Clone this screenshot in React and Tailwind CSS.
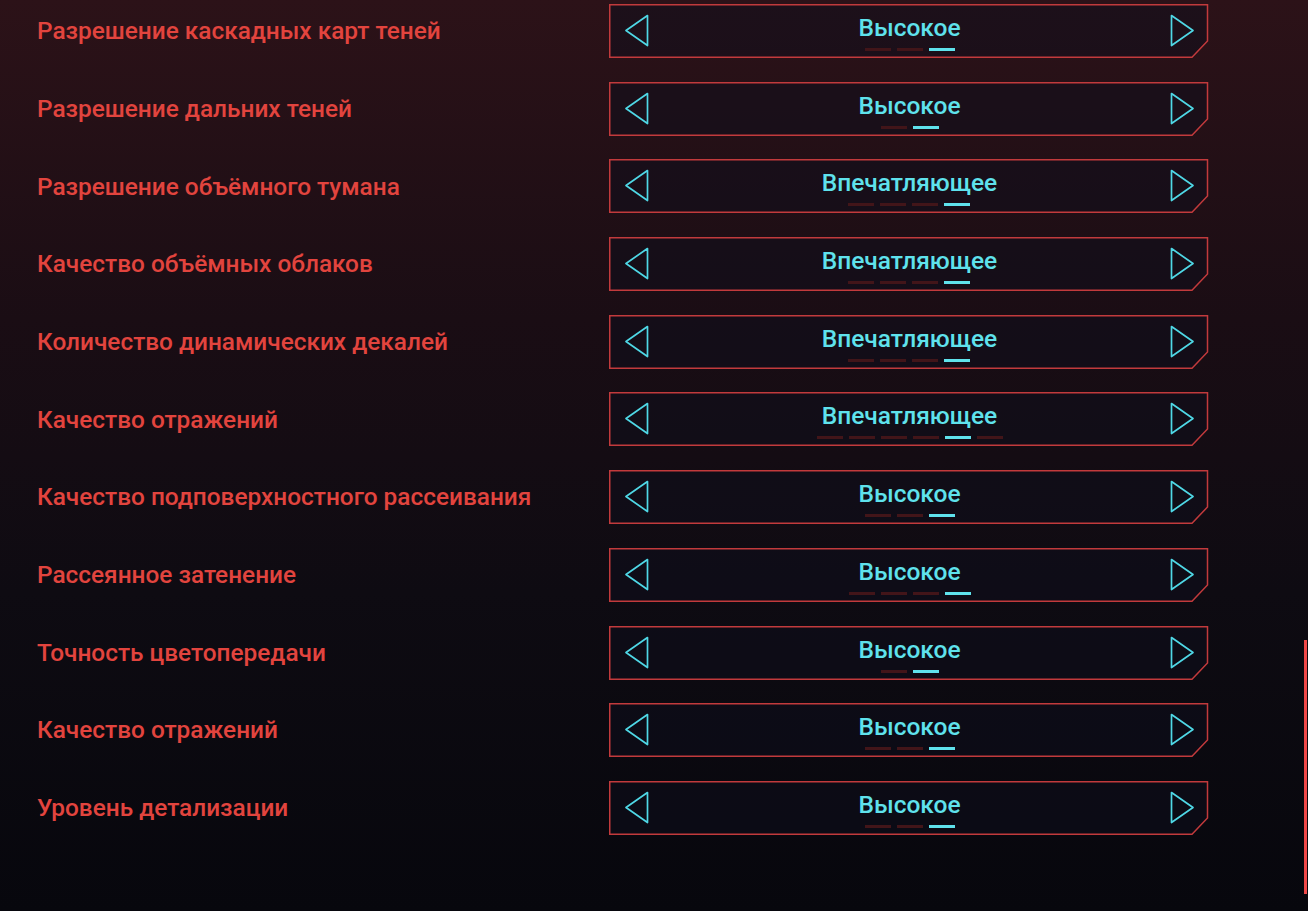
const rows = [
  { label: 'Разрешение каскадных карт теней', value: 'Высокое', count: 3, active: 3 },
  { label: 'Разрешение дальних теней', value: 'Высокое', count: 2, active: 2 },
  { label: 'Разрешение объёмного тумана', value: 'Впечатляющее', count: 4, active: 4 },
  { label: 'Качество объёмных облаков', value: 'Впечатляющее', count: 4, active: 4 },
  { label: 'Количество динамических декалей', value: 'Впечатляющее', count: 4, active: 4 },
  { label: 'Качество отражений', value: 'Впечатляющее', count: 6, active: 5 },
  { label: 'Качество подповерхностного рассеивания', value: 'Высокое', count: 3, active: 3 },
  { label: 'Рассеянное затенение', value: 'Высокое', count: 4, active: 4 },
  { label: 'Точность цветопередачи', value: 'Высокое', count: 2, active: 2 },
  { label: 'Качество отражений', value: 'Высокое', count: 3, active: 3 },
  { label: 'Уровень детализации', value: 'Высокое', count: 3, active: 3 },
];

const font = { fontFamily: 'Roboto, "Noto Sans", sans-serif' };

function Arrow({ dir }) {
  return (
    <svg width="28" height="34" viewBox="0 0 28 34" className="shrink-0">
      {dir === 'left' ? (
        <path d="M24.5 1.5 L3 16.5 L24.5 31.5 Z" fill="none" stroke="#4fd8e6" strokeWidth="1.7" strokeLinejoin="round" />
      ) : (
        <path d="M3.5 1.5 L25 16.5 L3.5 31.5 Z" fill="none" stroke="#4fd8e6" strokeWidth="1.7" strokeLinejoin="round" />
      )}
    </svg>
  );
}

function Selector({ value, count, active }) {
  return (
    <div className="relative w-[600px] h-[54px] shrink-0">
      <svg className="absolute inset-0" width="600" height="54" viewBox="0 0 600 54">
        <path
          d="M0.75 0.75 H598.5 V37 L583 53.25 H0.75 Z"
          fill="rgba(14,14,28,0.5)"
          stroke="#c23a3c"
          strokeWidth="1.5"
        />
      </svg>
      <div className="relative flex h-full items-center justify-between pl-[14px] pr-[13px]">
        <Arrow dir="left" />
        <div className="flex flex-col items-center pt-[3px]">
          <span className="text-[24.5px] leading-[28px] font-medium text-[#5fe2ec]" style={font}>
            {value}
          </span>
          <div className="mt-[6px] flex gap-[6px]">
            {Array.from({ length: count }, (_, i) => (
              <span
                key={i}
                className={
                  i + 1 === active
                    ? 'block h-[3px] w-[26px] bg-[#5fe2ec]'
                    : 'block h-[3px] w-[26px] bg-[#421519]'
                }
              />
            ))}
          </div>
        </div>
        <Arrow dir="right" />
      </div>
    </div>
  );
}

export default function App() {
  return (
    <div className="relative h-[911px] w-[1308px] overflow-hidden bg-[linear-gradient(180deg,#2c1218_0%,#1a0d14_35%,#0e0b12_65%,#07070d_100%)]">
      <div className="flex flex-col gap-[23.7px] pt-[4px] pl-[37px]">
        {rows.map((row, i) => (
          <div key={i} className="flex items-center">
            <div className="w-[572px] pt-[1px] text-[24.4px] font-medium text-[#e2443e]" style={font}>
              {row.label}
            </div>
            <Selector value={row.value} count={row.count} active={row.active} />
          </div>
        ))}
      </div>
      <div className="absolute right-[1px] top-[640px] h-[254px] w-[3px] bg-[#f04848]" />
    </div>
  );
}
